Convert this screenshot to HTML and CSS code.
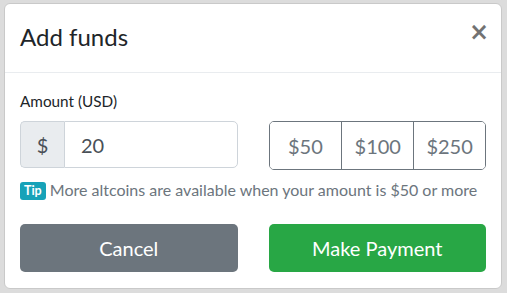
FILE: index.html
```html
<!DOCTYPE html>
<html lang="en">
<head>
    <meta charset="UTF-8">
    <meta name="viewport" content="width=device-width, initial-scale=1.0">
    <title>Add funds</title>
    <link rel="stylesheet" href="styles.css">
</head>
<body>
    <div class="modal">
        <div class="modal-header">
            <h2>Add funds</h2>
            <button class="close" aria-label="Close">&times;</button>
        </div>

        <div class="modal-body">
            <label for="amount">Amount (USD)</label>
            <div class="row">
                <div class="input-group">
                    <span class="addon">$</span>
                    <input id="amount" type="text" value="20">
                </div>
                <div class="btn-group">
                    <button>$50</button>
                    <button>$100</button>
                    <button>$250</button>
                </div>
            </div>

            <p class="tip"><span class="badge">Tip</span> More altcoins are available when your amount is $50 or more</p>

            <div class="row actions">
                <button class="btn btn-cancel">Cancel</button>
                <button class="btn btn-pay">Make Payment</button>
            </div>
        </div>
    </div>
</body>
</html>
```

FILE: styles.css
```css
body {
    font-family: Lato, 'Open Sans', sans-serif;
    background: #dcdcdc;
    margin: 0;
    padding: 3px 5px 4px 4px;
    height: 293px;
    box-sizing: border-box;
    overflow: hidden;
    color: #212529;
}

.modal {
    background: #fff;
    border: 1px solid #c9c9c9;
    border-radius: 6px;
    height: 100%;
    box-sizing: border-box;
}

.modal-header {
    display: flex;
    justify-content: space-between;
    align-items: center;
    height: 68px;
    padding: 0 15px;
    border-bottom: 1px solid #e9ecef;
}

.modal-header h2 {
    margin: -4px 0 0;
    font-size: 24px;
    font-weight: 400;
}

.close {
    border: none;
    background: none;
    font-family: 'DejaVu Sans', sans-serif;
    font-size: 24px;
    font-weight: 700;
    color: #000;
    opacity: 0.55;
    padding: 0;
    margin-top: -12px;
    margin-right: -3px;
    line-height: 1;
    cursor: pointer;
}

.modal-body {
    padding: 17px 15px 0;
}

label {
    display: block;
    font-size: 15.3px;
    line-height: 22px;
    margin-bottom: 9px;
}

.row {
    display: grid;
    grid-template-columns: minmax(0, 1fr) minmax(0, 1fr);
    gap: 31px;
}

.input-group {
    display: flex;
    height: 47px;
}

.addon {
    width: 43px;
    flex: none;
    display: flex;
    align-items: center;
    justify-content: center;
    background: #e9ecef;
    border: 1px solid #ced4da;
    border-right: none;
    border-radius: 5px 0 0 5px;
    font-size: 20px;
    color: #495057;
}

.input-group input {
    flex: 1;
    min-width: 0;
    border: 1px solid #ced4da;
    border-radius: 0 5px 5px 0;
    padding: 0 16px;
    font-family: inherit;
    font-size: 20px;
    color: #495057;
    outline: none;
}

.btn-group {
    display: grid;
    grid-template-columns: repeat(3, 1fr);
    height: 47px;
    border: 1px solid #6c757d;
    border-radius: 5px;
    overflow: hidden;
}

.btn-group button {
    border: none;
    background: #fff;
    font-family: inherit;
    font-size: 20px;
    color: #6c757d;
    padding: 0;
    cursor: pointer;
}

.btn-group button + button {
    border-left: 1px solid #6c757d;
}

.tip {
    margin: 9px 0 0;
    font-size: 16px;
    line-height: 22px;
    color: #6c757d;
}

.badge {
    display: inline-block;
    background: #17a2b8;
    color: #fff;
    font-size: 12.5px;
    font-weight: 700;
    line-height: 1;
    padding: 3px 4px 2px;
    border-radius: 3px;
    vertical-align: 1px;
}

.actions {
    margin-top: 23px;
}

.btn {
    height: 48px;
    border: none;
    border-radius: 5px;
    font-family: inherit;
    font-size: 20px;
    color: #fff;
    cursor: pointer;
}

.btn-cancel {
    background: #6c757d;
}

.btn-pay {
    background: #28a745;
}
```
